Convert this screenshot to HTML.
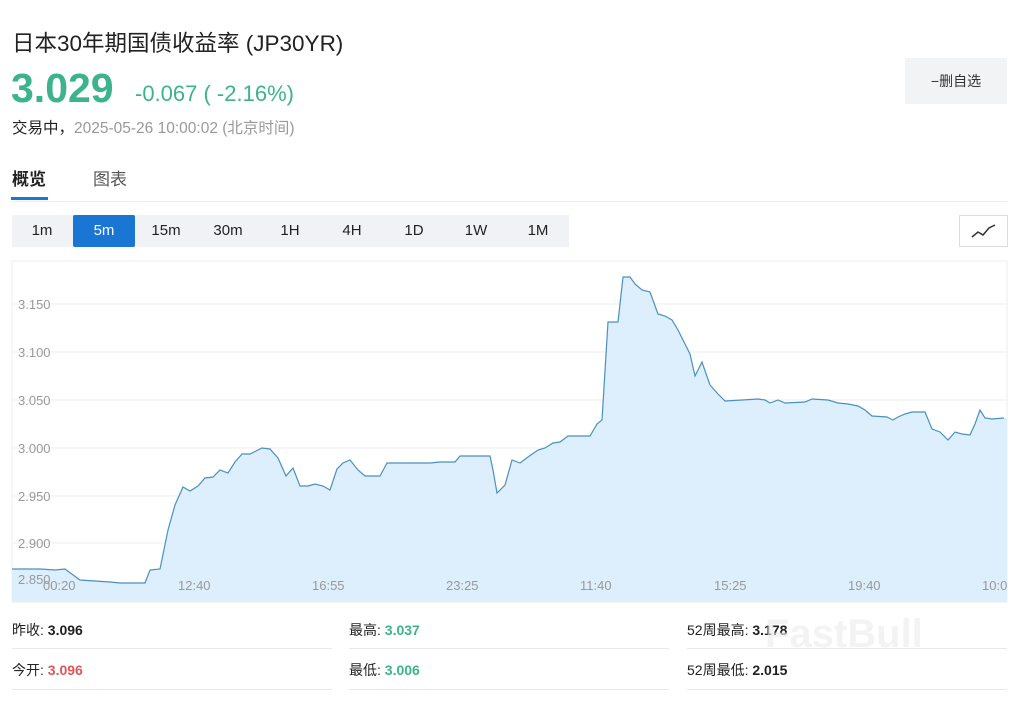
<!DOCTYPE html>
<html><head><meta charset="utf-8"><style>
body{margin:0;width:1024px;height:710px;background:#fff;font-family:"Liberation Sans","Noto Sans CJK SC",sans-serif;position:relative;overflow:hidden;color:#222}
.a{position:absolute;white-space:nowrap}
.tf{position:absolute;top:215px;height:32px;width:62px;line-height:32px;text-align:center;font-size:15px;color:#222}
.st{position:absolute;font-size:14px;color:#222}
.st b{font-weight:bold}
.ln{position:absolute;height:1px;background:#e8e8e8;width:320px}
</style></head><body>
<div class="a" style="left:12px;top:26px;font-size:22.5px;color:#222">日本30年期国债收益率 (JP30YR)</div>
<div class="a" style="left:11px;top:65px;font-size:41px;font-weight:bold;color:#3db38c">3.029</div>
<div class="a" style="left:135px;top:81px;font-size:22px;color:#3db38c">-0.067 ( -2.16%)</div>
<div class="a" style="left:12px;top:116px;font-size:15.5px;color:#222">交易中，<span style="color:#999">2025-05-26 10:00:02 (北京时间)</span></div>
<div class="a" style="left:905px;top:58px;width:102px;height:46px;background:#f2f3f5;line-height:46px;text-align:center;font-size:14px;color:#333">−删自选</div>
<div class="a" style="left:12px;top:165px;font-size:17px;font-weight:bold;color:#222">概览</div>
<div class="a" style="left:93px;top:165px;font-size:17px;color:#555">图表</div>
<div class="a" style="left:11px;top:197px;width:37px;height:3px;background:#1976d2"></div>
<div class="a" style="left:11px;top:201px;width:996px;height:1px;background:#eee"></div>
<div class="a" style="left:12px;top:215px;width:557px;height:32px;background:#f0f2f5"></div>
<div class="a" style="left:73px;top:215px;width:62px;height:32px;background:#1976d2;border-radius:2px"></div>
<div class="tf" style="left:11px">1m</div>
<div class="tf" style="left:73px;color:#fff">5m</div>
<div class="tf" style="left:135px">15m</div>
<div class="tf" style="left:197px">30m</div>
<div class="tf" style="left:259px">1H</div>
<div class="tf" style="left:321px">4H</div>
<div class="tf" style="left:383px">1D</div>
<div class="tf" style="left:445px">1W</div>
<div class="tf" style="left:507px">1M</div>
<div class="a" style="left:959px;top:215px;width:47px;height:30px;border:1px solid #ddd;background:#fff">
<svg width="47" height="30"><polyline points="12,21 18,16 23,19 29,12 35,9" fill="none" stroke="#333" stroke-width="1.5"/></svg></div>
<svg class="a" style="left:0;top:0" width="1024" height="710">
<rect x="12" y="261" width="995" height="341" fill="#fff" stroke="#eee"/>
<g stroke="#eee" stroke-width="1">
<line x1="12" x2="1007" y1="304" y2="304"/><line x1="12" x2="1007" y1="352" y2="352"/><line x1="12" x2="1007" y1="400" y2="400"/><line x1="12" x2="1007" y1="448" y2="448"/><line x1="12" x2="1007" y1="496" y2="496"/><line x1="12" x2="1007" y1="543" y2="543"/></g>
<polygon fill="#ddeefc" points="12,602 12,569 40,569 55,570 65,569 80,580 95,581 110,582 120,583 145,583 150,570 160,569 168,530 175,505 183,487 190,491 198,486 205,478 213,477 220,470 228,473 235,462 242,454 250,454 256,451 262,448 270,449 278,458 286,476 293,468 300,486 308,486 315,484 323,486 330,490 337,469 343,463 350,460 358,470 365,476 372,476 380,476 387,463 395,463 430,463 440,462 455,462 460,456 475,456 490,456 493,470 497,493 505,485 512,460 520,463 528,457 538,450 545,448 553,443 560,442 568,436 590,436 597,424 602,420 608,322 613,322 618,322 623,277 630,277 635,284 642,290 650,292 658,314 665,316 672,320 678,330 685,344 690,354 695,376 702,362 710,385 718,394 725,401 742,400 758,399 765,400 770,403 778,400 785,403 805,402 812,399 828,400 838,403 848,404 858,406 865,410 872,416 887,417 893,420 898,417 905,414 912,412 925,412 932,429 940,432 948,440 955,432 962,434 970,435 975,424 980,410 985,418 992,419 1004,418 1007,418 1007,602"/>
<polyline fill="none" stroke="#4a90c2" stroke-width="1.2" points="12,569 40,569 55,570 65,569 80,580 95,581 110,582 120,583 145,583 150,570 160,569 168,530 175,505 183,487 190,491 198,486 205,478 213,477 220,470 228,473 235,462 242,454 250,454 256,451 262,448 270,449 278,458 286,476 293,468 300,486 308,486 315,484 323,486 330,490 337,469 343,463 350,460 358,470 365,476 372,476 380,476 387,463 395,463 430,463 440,462 455,462 460,456 475,456 490,456 493,470 497,493 505,485 512,460 520,463 528,457 538,450 545,448 553,443 560,442 568,436 590,436 597,424 602,420 608,322 613,322 618,322 623,277 630,277 635,284 642,290 650,292 658,314 665,316 672,320 678,330 685,344 690,354 695,376 702,362 710,385 718,394 725,401 742,400 758,399 765,400 770,403 778,400 785,403 805,402 812,399 828,400 838,403 848,404 858,406 865,410 872,416 887,417 893,420 898,417 905,414 912,412 925,412 932,429 940,432 948,440 955,432 962,434 970,435 975,424 980,410 985,418 992,419 1004,418"/>
<g font-family="Liberation Sans" font-size="13" fill="#999">
<text x="18" y="309">3.150</text><text x="18" y="357">3.100</text><text x="18" y="405">3.050</text><text x="18" y="453">3.000</text><text x="18" y="501">2.950</text><text x="18" y="548">2.900</text><text x="18" y="584">2.850</text>
<text x="43" y="590">00:20</text><text x="178" y="590">12:40</text><text x="312" y="590">16:55</text><text x="446" y="590">23:25</text><text x="580" y="590">11:40</text><text x="714" y="590">15:25</text><text x="848" y="590">19:40</text><text x="982" y="590">10:0</text></g>
</svg>
<div class="st" style="left:12px;top:620px">昨收: <b>3.096</b></div>
<div class="st" style="left:349px;top:620px">最高: <b style="color:#3db38c">3.037</b></div>
<div class="st" style="left:687px;top:620px">52周最高: <b>3.178</b></div>
<div class="st" style="left:12px;top:660px">今开: <b style="color:#e05555">3.096</b></div>
<div class="st" style="left:349px;top:660px">最低: <b style="color:#3db38c">3.006</b></div>
<div class="st" style="left:687px;top:660px">52周最低: <b>2.015</b></div>
<div class="ln" style="left:12px;top:648px"></div><div class="ln" style="left:349px;top:648px"></div><div class="ln" style="left:687px;top:648px"></div>
<div class="ln" style="left:12px;top:689px"></div><div class="ln" style="left:349px;top:689px"></div><div class="ln" style="left:687px;top:689px"></div>
<div class="a" style="left:765px;top:612px;font-size:40px;font-weight:bold;color:rgba(235,235,235,0.6)">FastBull</div>
</body></html>
